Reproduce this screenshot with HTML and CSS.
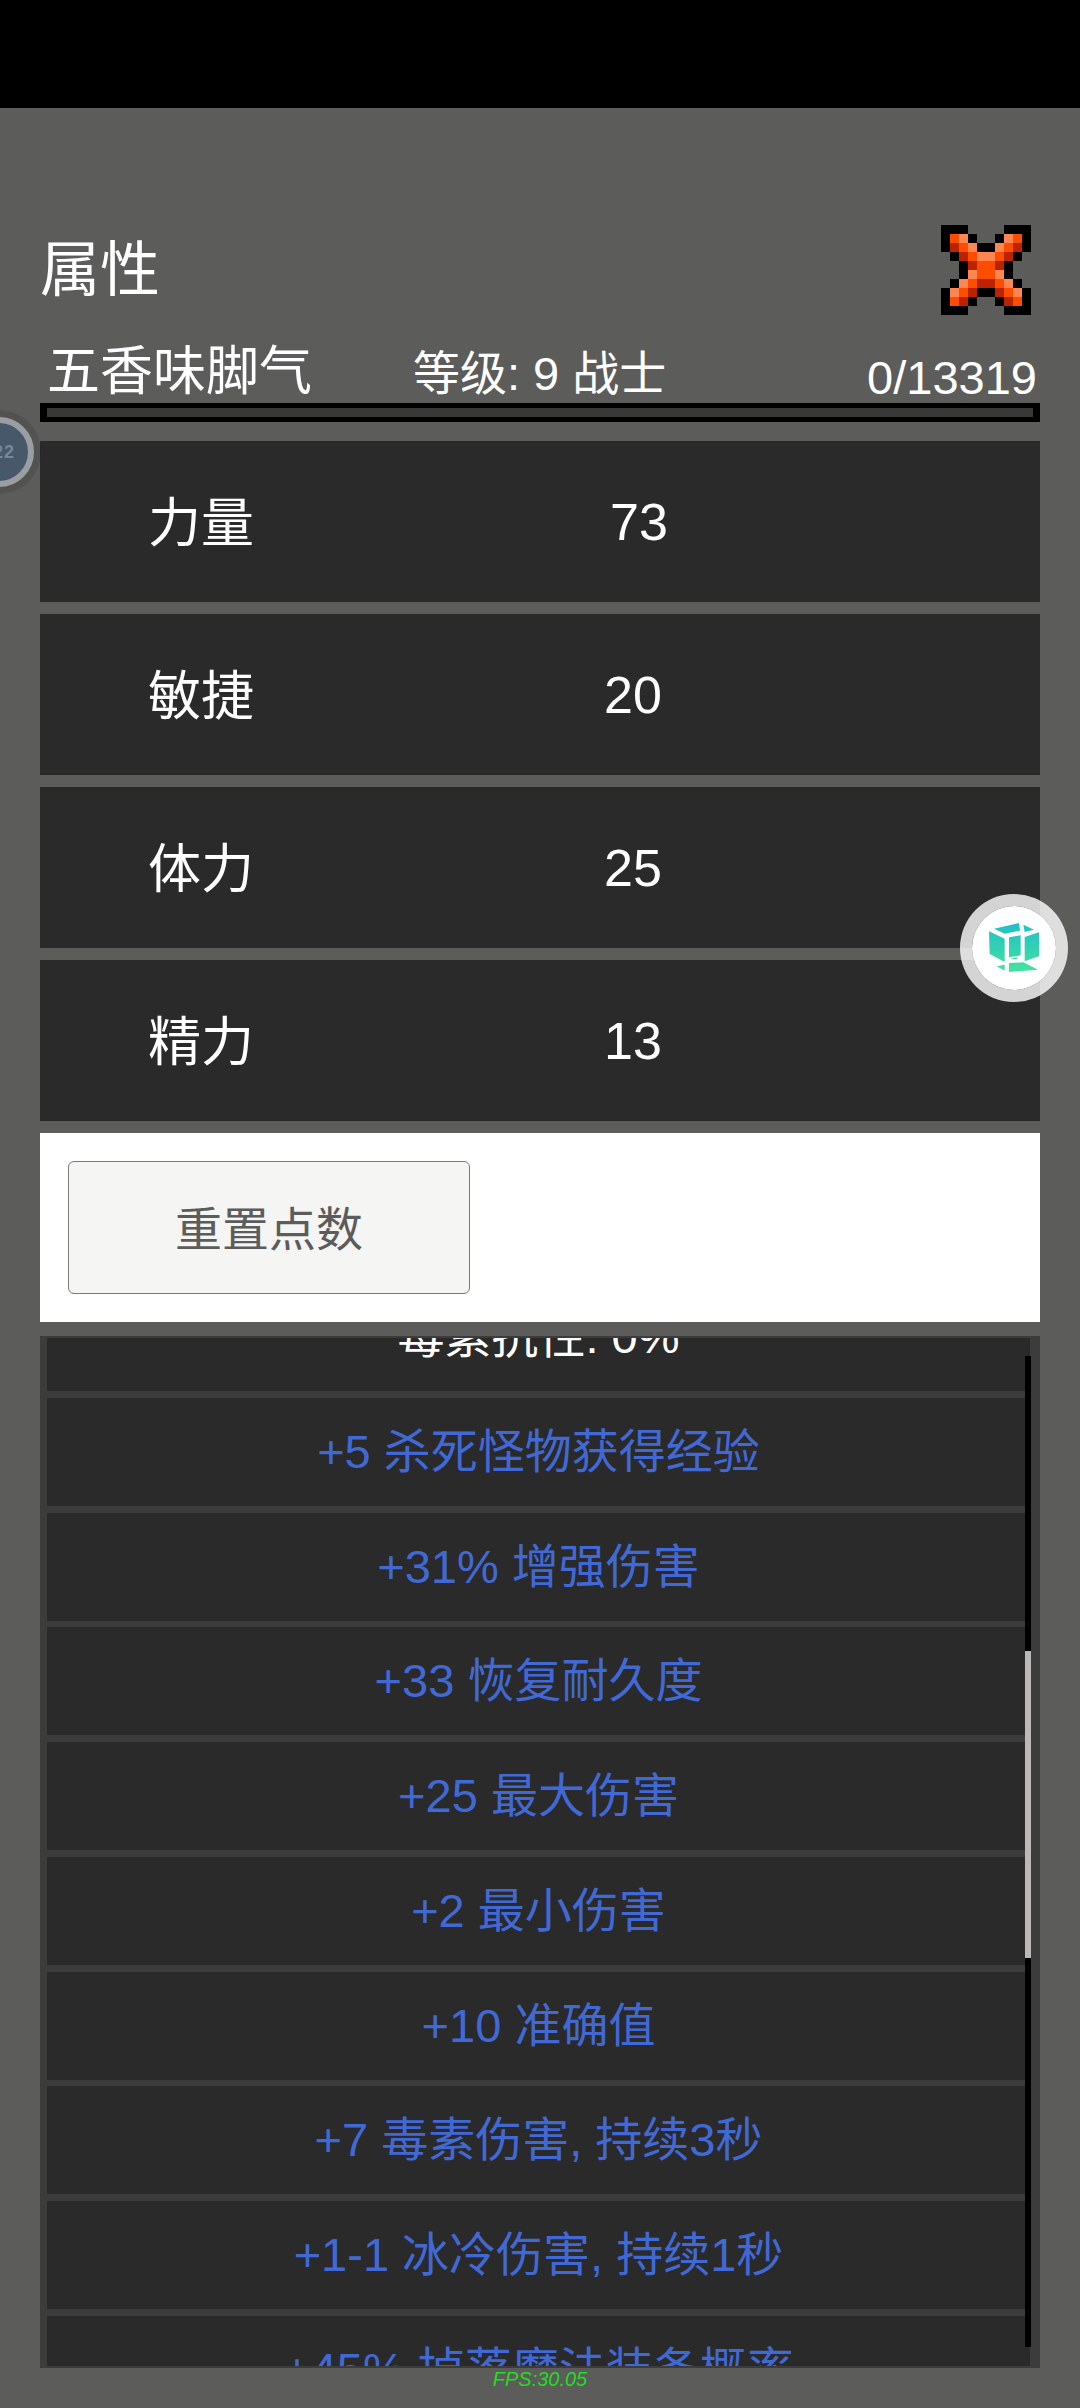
FILE: index.html
```html
<!DOCTYPE html>
<html>
<head>
  <title>属性</title>
  <link rel="stylesheet" href="styles.css">
</head>
<body>
  <div class="status-bar"></div>

  <div class="panel">
    <div class="title-row">
      <h1 class="title">属性</h1>
      <svg class="close-icon" viewBox="0 0 10 10" shape-rendering="crispEdges">
        <path fill="#000" d="M0 0h3v1H0zM7 0h3v1H7zM0 1h1v2H0zM3 1h1v1H3zM6 1h1v1H6zM9 1h1v2H9zM4 2h2v1H4zM1 3h1v1H1zM8 3h1v1H8zM2 4h1v2H2zM7 4h1v2H7zM1 6h1v1H1zM8 6h1v1H8zM0 7h1v2H0zM4 7h2v1H4zM9 7h1v2H9zM3 8h1v1H3zM6 8h1v1H6zM0 9h3v1H0zM7 9h3v1H7z"/>
        <path fill="#ff4d00" d="M1 1h1v1H1zM8 1h1v1H8zM2 2h1v1H2zM7 2h1v1H7zM3 3h1v1H3zM6 3h1v1H6zM4 4h2v2H4zM3 6h1v1H3zM6 6h1v1H6zM2 7h1v1H2zM7 7h1v1H7zM1 8h1v1H1zM8 8h1v1H8z"/>
        <path fill="#ff8552" d="M2 1h1v1H2zM7 1h1v1H7zM3 2h1v1H3zM6 2h1v1H6zM4 3h2v1H4zM3 5h1v1H3zM6 5h1v1H6zM2 6h1v1H2zM7 6h1v1H7zM1 7h1v1H1zM8 7h1v1H8z"/>
        <path fill="#bb2200" d="M1 2h1v1H1zM8 2h1v1H8zM2 3h1v1H2zM7 3h1v1H7zM3 4h1v1H3zM6 4h1v1H6zM4 6h2v1H4zM3 7h1v1H3zM6 7h1v1H6zM2 8h1v1H2zM7 8h1v1H7z"/>
      </svg>
    </div>

    <div class="info-row">
      <span class="hero-name">五香味脚气</span>
      <span class="hero-level">等级: 9 战士</span>
      <span class="hero-xp">0/13319</span>
    </div>
    <div class="xp-bar"></div>

    <div class="stats">
      <div class="stat-row"><span class="stat-name">力量</span><span class="stat-value stat-value-shift">73</span></div>
      <div class="stat-row"><span class="stat-name">敏捷</span><span class="stat-value">20</span></div>
      <div class="stat-row"><span class="stat-name">体力</span><span class="stat-value">25</span></div>
      <div class="stat-row"><span class="stat-name">精力</span><span class="stat-value">13</span></div>
    </div>

    <div class="reset-box">
      <button class="reset-button" type="button"><span class="reset-label">重置点数</span></button>
    </div>

    <div class="mods">
      <div class="mods-scroll">
        <div class="mod mod-first">毒素抗性: 0%</div>
        <div class="mod mod-blue">+5 杀死怪物获得经验</div>
        <div class="mod mod-blue">+31% 增强伤害</div>
        <div class="mod mod-blue">+33 恢复耐久度</div>
        <div class="mod mod-blue">+25 最大伤害</div>
        <div class="mod mod-blue">+2 最小伤害</div>
        <div class="mod mod-blue">+10 准确值</div>
        <div class="mod mod-blue">+7 毒素伤害, 持续3秒</div>
        <div class="mod mod-blue">+1-1 冰冷伤害, 持续1秒</div>
        <div class="mod mod-blue">+45% 掉落魔法装备概率</div>
      </div>
      <div class="scrollbar"><div class="scrollbar-thumb"></div></div>
    </div>

    <div class="fps">FPS:30.05</div>
  </div>

  <div class="side-badge"><span class="side-badge-text">22</span></div>

  <div class="float-button">
    <svg class="cube-icon" viewBox="0 0 180 180">
      <defs>
        <linearGradient id="cube-fill" x1="0" y1="15" x2="0" y2="162" gradientUnits="userSpaceOnUse">
          <stop offset="0" stop-color="#1fc0c8"/>
          <stop offset="1" stop-color="#45e29c"/>
        </linearGradient>
      </defs>
      <path fill="url(#cube-fill)" d="M30 32L105 15L108 38L62 47ZM118 20L150 35L122 42ZM15 40L62 62V132L17 108ZM122 57L165 43V115L122 130ZM75 58L110 52V112L75 118ZM85 120L100 118V122L85 124ZM38 145L62 140V158ZM75 135L118 133L162 155L75 162Z"/>
    </svg>
  </div>
</body>
</html>
```

FILE: styles.css
```css
html, body {
  margin: 0;
  padding: 0;
}

body {
  position: relative;
  width: 1080px;
  height: 2408px;
  overflow: hidden;
  background-color: #5c5c5a;
  color: #fff;
  font-family: "Liberation Sans", "Noto Sans CJK SC", sans-serif;
}

.status-bar {
  height: 108px;
  background-color: #000;
}

.panel {
  padding: 117px 40px 0;
}

.title-row {
  display: flex;
  align-items: center;
  justify-content: space-between;
  height: 90px;
}

.title {
  margin: 0 0 12px;
  font-size: 60px;
  font-weight: 400;
}

.close-icon {
  width: 90px;
  height: 90px;
  margin-right: 9px;
}

.info-row {
  display: flex;
  align-items: center;
  height: 88px;
  padding: 0 3px 0 7px;
}

.hero-name {
  width: 366px;
  margin-top: 16px;
  font-size: 53px;
}

.hero-level {
  flex: 1;
  margin-top: 20px;
  font-size: 47px;
}

.hero-xp {
  margin-top: 36px;
  font-size: 47px;
}

.xp-bar {
  height: 9px;
  background-color: #383838;
  border: 5px solid #000;
  border-left-width: 7px;
  border-right-width: 7px;
}

.stats {
  display: flex;
  flex-direction: column;
  gap: 12px;
  margin-top: 19px;
}

.stat-row {
  display: flex;
  align-items: center;
  height: 161px;
  padding-left: 108px;
  background-color: #2a2a2a;
}

.stat-name {
  width: 455px;
  margin-bottom: 5px;
  font-size: 53px;
}

.stat-value {
  width: 60px;
  font-size: 52px;
  text-align: center;
}

.stat-value-shift {
  margin-left: 6px;
}

.reset-box {
  margin-top: 12px;
  padding: 28px;
  background-color: #fff;
}

.reset-button {
  display: block;
  width: 402px;
  height: 133px;
  padding: 0 0 5px;
  background-color: #f5f5f3;
  border: 1px solid #7a7a7a;
  border-radius: 6px;
  color: #5c5c5c;
  font-family: inherit;
  font-size: 47px;
}

.mods {
  position: relative;
  height: 1028px;
  margin-top: 14px;
  padding: 2px 10px 2px 7px;
  background-color: #3c3c3c;
}

.mods-scroll {
  display: flex;
  flex-direction: column;
  gap: 6.75px;
  height: 100%;
  overflow: hidden;
}

.mod {
  flex: none;
  height: 108px;
  line-height: 108px;
  background-color: #2a2a2a;
  font-size: 47px;
  text-align: center;
}

.mod-first {
  margin-top: -55px;
}

.mod-blue {
  color: #4169d6;
}

.scrollbar {
  position: absolute;
  top: 20px;
  right: 9px;
  width: 6px;
  height: 991px;
  background-color: #000;
}

.scrollbar-thumb {
  position: absolute;
  top: 295px;
  width: 100%;
  height: 307px;
  background-color: #bcb8b8;
}

.fps {
  color: #22dd22;
  font-size: 20px;
  font-style: italic;
  text-align: center;
}

.side-badge {
  position: absolute;
  top: 417px;
  left: -36px;
  width: 58px;
  height: 58px;
  display: flex;
  align-items: center;
  justify-content: flex-end;
  background: radial-gradient(circle, #48586b 72%, #3e628f 78%);
  border: 6px solid #9a9ea2;
  border-radius: 50%;
  box-shadow: 0 0 0 7px rgba(0, 0, 0, 0.1);
}

.side-badge-text {
  margin-right: 13px;
  color: #75879a;
  font-size: 18px;
  font-weight: bold;
  letter-spacing: 1px;
}

.float-button {
  position: absolute;
  top: 894px;
  left: 960px;
  box-sizing: border-box;
  display: flex;
  align-items: center;
  justify-content: center;
  width: 108px;
  height: 108px;
  background-color: #fff;
  background-clip: padding-box;
  border: 12px solid rgba(255, 255, 255, 0.8);
  border-radius: 50%;
}

.cube-icon {
  width: 60px;
  height: 60px;
}
```
